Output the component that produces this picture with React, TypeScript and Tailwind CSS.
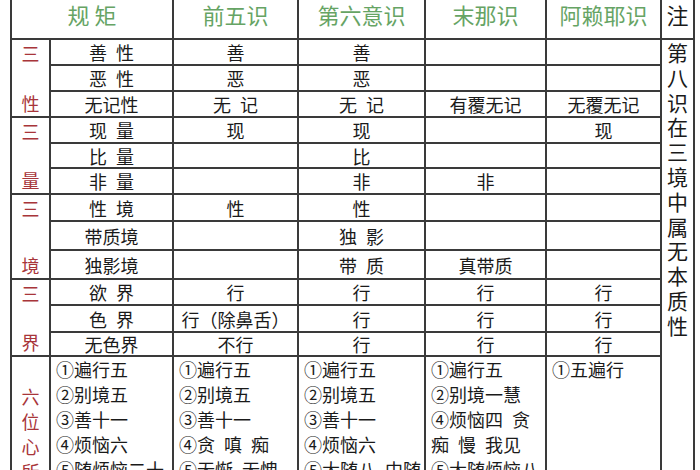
import React from "react";

const cell = "border-2 border-[#3a3a3a] p-0";
const text = "text-center align-middle text-[18px] leading-none text-[#1a1a1a]";

const rows = [
  { h: "h-[26px]", label: "善\u2002性", cells: ["善", "善", "", ""] },
  { h: "h-[26px]", label: "恶\u2002性", cells: ["恶", "恶", "", ""] },
  { h: "h-[26px]", label: "无记性", cells: ["无\u2002记", "无\u2002记", "有覆无记", "无覆无记"] },
  { h: "h-[26px]", label: "现\u2002量", cells: ["现", "现", "", "现"] },
  { h: "h-[25px]", label: "比\u2002量", cells: ["", "比", "", ""] },
  { h: "h-[26px]", label: "非\u2002量", cells: ["", "非", "非", ""] },
  { h: "h-[27px]", label: "性\u2002境", cells: ["性", "性", "", ""] },
  { h: "h-[29px]", label: "带质境", cells: ["", "独\u2002影", "", ""] },
  { h: "h-[29px]", label: "独影境", cells: ["", "带\u2002质", "真带质", ""] },
  { h: "h-[26px]", label: "欲\u2002界", cells: ["行", "行", "行", "行"] },
  { h: "h-[27px]", label: "色\u2002界", cells: ["行（除鼻舌）", "行", "行", "行"] },
  { h: "h-[24px]", label: "无色界", cells: ["不行", "行", "行", "行"] },
];

// category labels: first char on the group's top row, last char on its bottom row
const groups: Record<number, { first: string; last: string; h: string }> = {
  0: { first: "三", last: "性", h: "h-[76px]" },
  3: { first: "三", last: "量", h: "h-[75px]" },
  6: { first: "三", last: "境", h: "h-[83px]" },
  9: { first: "三", last: "界", h: "h-[75px]" },
};

const lists = [
  ["①遍行五", "②别境五", "③善十一", "④烦恼六", "⑤随烦恼二十"],
  ["①遍行五", "②别境五", "③善十一", "④贪\u2002嗔\u2002痴", "⑤无惭\u2002无愧"],
  ["①遍行五", "②别境五", "③善十一", "④烦恼六", "⑤大随八\u2002中随"],
  ["①遍行五", "②别境一慧", "④烦恼四\u2002贪", "痴\u2002慢\u2002我见", "⑤大随烦恼八"],
  ["①五遍行"],
];

const heads = ["前五识", "第六意识", "末那识", "阿赖耶识"];

export default function App() {
  return (
    <div
      className="h-[470px] w-[700px] overflow-hidden bg-white pl-[10px]"
      style={{ fontFamily: '"Noto Sans CJK SC", "Noto Sans", sans-serif' }}
    >
      <table className="table-fixed border-collapse">
        <colgroup>
          <col className="w-[39px]" />
          <col className="w-[123px]" />
          <col className="w-[125px]" />
          <col className="w-[127px]" />
          <col className="w-[121px]" />
          <col className="w-[115px]" />
          <col className="w-[33px]" />
        </colgroup>
        <tbody>
          <tr className="h-[39px]">
            <td colSpan={2} className={`${cell} border-t-0 align-top pt-px text-center text-[22px] leading-[26px] text-[#66a464]`}>
              规&nbsp;矩
            </td>
            {heads.map((h) => (
              <td key={h} className={`${cell} border-t-0 align-top pt-px text-center text-[22px] leading-[26px] text-[#66a464]`}>
                {h}
              </td>
            ))}
            <td className={`${cell} border-t-0 align-top pt-px text-center text-[22px] leading-[26px] text-[#1a1a1a]`}>注</td>
          </tr>
          {rows.map((r, i) => (
            <tr key={i} className={r.h}>
              {groups[i] && (
                <td rowSpan={3} className={`${cell} align-top`}>
                  <div className={`${groups[i].h} flex flex-col items-center justify-between text-[18px] leading-[26px] text-[#a8353a]`}>
                    <span>{groups[i].first}</span>
                    <span>{groups[i].last}</span>
                  </div>
                </td>
              )}
              <td className={`${cell} ${text}`}>{r.label}</td>
              {r.cells.map((c, j) => (
                <td key={j} className={`${cell} ${text} whitespace-nowrap`}>
                  {c}
                </td>
              ))}
              {i === 0 && (
                <td rowSpan={13} className={`${cell} align-top`}>
                  <div className="mx-auto w-[22px] break-all text-center text-[21px] leading-[24.8px] text-[#1a1a1a]">
                    第八识在三境中属无本质性
                  </div>
                </td>
              )}
            </tr>
          ))}
          <tr className="h-[180px]">
            <td className={`${cell} align-top`}>
              <div className="flex flex-col items-center pt-[27px] text-[18px] leading-[25px] text-[#a8353a]">
                <span>六</span>
                <span>位</span>
                <span>心</span>
                <span>所</span>
              </div>
            </td>
            {lists.map((l, k) => (
              <td key={k} className={`${cell} align-top`}>
                <div className="flex flex-col pl-[5px] text-[18px] leading-[25px] whitespace-nowrap text-[#1a1a1a]">
                  {l.map((t) => (
                    <span key={t}>{t}</span>
                  ))}
                </div>
              </td>
            ))}
          </tr>
        </tbody>
      </table>
    </div>
  );
}
